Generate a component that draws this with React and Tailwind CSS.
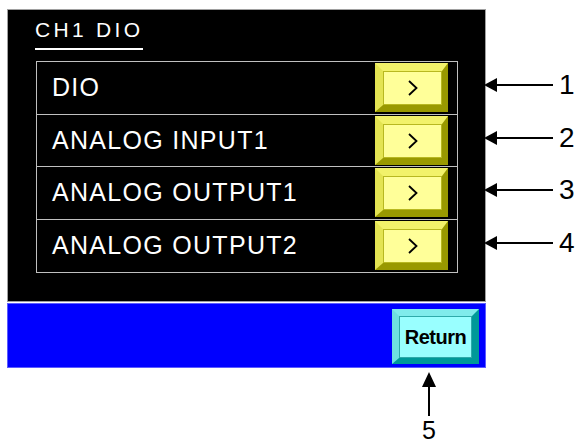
import React from 'react';

const items = ['DIO', 'ANALOG INPUT1', 'ANALOG OUTPUT1', 'ANALOG OUTPUT2'];

function ArrowLeft() {
  return (
    <svg width="70" height="16" viewBox="0 0 70 16" className="-ml-[2px] shrink-0">
      <polygon points="0,8 13,1 13,15" fill="#000" />
      <rect x="12" y="7" width="57" height="2" fill="#000" />
    </svg>
  );
}

function ArrowUp() {
  return (
    <svg width="14" height="44" viewBox="0 0 14 44">
      <polygon points="7,0 0,15 14,15" fill="#000" />
      <rect x="6" y="14" width="2" height="30" fill="#000" />
    </svg>
  );
}

export default function App() {
  return (
    <div className="w-[579px] h-[444px] bg-white overflow-hidden flex items-start font-['Liberation_Sans',Arial,sans-serif]">
      {/* Screen */}
      <div className="ml-[7px] pt-[9px] w-[479px] shrink-0 flex flex-col">
        <div className="h-[293px] bg-black border border-[#a0a0a0] pl-[27px] pt-[8px] flex flex-col">
          <div>
            <span className="inline-block text-white text-[21px] leading-[24px] tracking-[3.3px] pb-[6px] border-b-2 border-white">
              CH1 DIO
            </span>
          </div>
          <div className="mt-[11px] ml-[1px] w-[422px] border border-[#c0c0c0] flex flex-col divide-y divide-[#c0c0c0]">
            {items.map((label) => (
              <div key={label} className="h-[52.5px] flex items-center justify-between pl-[15px] pr-[9px]">
                <span className="text-white text-[25px] leading-none tracking-[1.3px]">{label}</span>
                <button className="w-[73px] h-[49px] border-t-[8px] border-l-[8px] border-r-[6px] border-b-[7px] border-t-[#f2f26a] border-l-[#e4e452] border-r-[#999900] border-b-[#999900] flex">
                  <span className="flex-1 bg-[#ffff99] border border-[#b8b820] flex items-center justify-center">
                    <svg width="10" height="16" viewBox="0 0 10 16">
                      <polyline points="1,1 8.5,8 1,15" fill="none" stroke="#000" strokeWidth="1.8" />
                    </svg>
                  </span>
                </button>
              </div>
            ))}
          </div>
        </div>

        {/* Bottom bar */}
        <div className="mt-[1px] h-[65px] bg-[#0000ff] border border-[#5c5cff] flex justify-end pt-[5px] pr-[6px]">
          <button className="w-[87px] h-[55px] border-t-[7px] border-l-[7px] border-r-[7px] border-b-[6px] border-t-[#7febeb] border-l-[#6ee0e0] border-r-[#009999] border-b-[#009999] flex">
            <span className="flex-1 bg-[#99ffff] border border-[#2eaaaa] flex items-center justify-center text-black font-bold text-[20px] leading-none tracking-[-0.5px]">
              Return
            </span>
          </button>
        </div>

        <div className="flex justify-end pr-[42px]">
          <div className="w-[30px] flex flex-col items-center">
            <div className="mt-[4px] h-[44px]">
              <ArrowUp />
            </div>
            <span className="mt-[2px] text-black text-[25px] leading-[25px]">5</span>
          </div>
        </div>
      </div>

      {/* Callouts */}
      <div className="pt-[59px] flex flex-col">
        {['1', '2', '3', '4'].map((n) => (
          <div key={n} className="h-[52.5px] flex items-center">
            <ArrowLeft />
            <span className="ml-[5px] text-black text-[28px] leading-[28px]">{n}</span>
          </div>
        ))}
      </div>
    </div>
  );
}
